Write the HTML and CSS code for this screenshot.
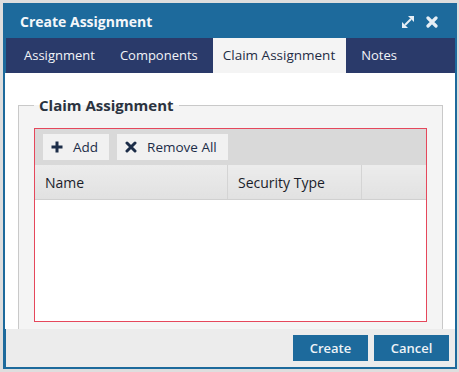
FILE: index.html
```html
<!DOCTYPE html>
<html lang="en">
<head>
    <meta charset="UTF-8">
    <title>Create Assignment</title>
    <link rel="stylesheet" href="styles.css">
</head>
<body>

    <div class="dialog">
        <div class="dialog-title">
            <span>Create Assignment</span>
            <div class="title-icons">
                <!-- maximize -->
                <svg width="12" height="12" viewBox="0 0 12 12">
                    <path d="M3 9 L9 3" stroke="#e6eef5" stroke-width="2"/>
                    <polygon points="6,0 12,0 12,6" fill="#e6eef5"/>
                    <polygon points="0,6 0,12 6,12" fill="#e6eef5"/>
                </svg>
                <!-- close -->
                <svg width="12" height="12" viewBox="0 0 12 12">
                    <path d="M2 2 L10 10 M10 2 L2 10" stroke="#e6eef5" stroke-width="3.2" stroke-linecap="round"/>
                </svg>
            </div>
        </div>

        <ul class="tabs">
            <li class="tab">Assignment</li>
            <li class="tab">Components</li>
            <li class="tab active">Claim Assignment</li>
            <li class="tab">Notes</li>
        </ul>

        <div class="content">
            <fieldset class="group">
                <legend>Claim Assignment</legend>
                <div class="grid-box">
                    <div class="toolbar">
                        <button class="tool-btn">
                            <svg width="12" height="12" viewBox="0 0 12 12">
                                <path d="M6 0.5 V11.5 M0.5 6 H11.5" stroke="#1c2d48" stroke-width="3"/>
                            </svg>
                            Add
                        </button>
                        <button class="tool-btn">
                            <svg width="12" height="12" viewBox="0 0 12 12">
                                <path d="M2 2 L10 10 M10 2 L2 10" stroke="#1c2d48" stroke-width="3" stroke-linecap="round"/>
                            </svg>
                            Remove All
                        </button>
                    </div>
                    <table class="grid">
                        <thead>
                            <tr>
                                <th class="col-name">Name</th>
                                <th class="col-type">Security Type</th>
                                <th></th>
                            </tr>
                        </thead>
                    </table>
                </div>
            </fieldset>
        </div>

        <div class="footer">
            <button class="btn">Create</button>
            <button class="btn">Cancel</button>
        </div>
    </div>

</body>
</html>
```

FILE: styles.css
```css
body {
    margin: 0;
    background-color: #dedede;
    font-family: 'Open Sans', sans-serif;
}

.dialog {
    width: 454px;
    margin: 3px;
    box-sizing: border-box;
    border: 2px solid #1d6a9c;
    background-color: #1d6a9c;
}

.dialog-title {
    height: 33px;
    display: flex;
    align-items: center;
    justify-content: space-between;
    padding: 0 17px 0 15px;
    color: #f4f7fa;
    font-size: 14px;
    font-weight: bold;
}

.title-icons {
    display: flex;
    gap: 12px;
    align-items: center;
}

.title-icons svg {
    display: block;
}

.tabs {
    list-style: none;
    margin: 0 0 0 1px;
    padding: 0 0 0 8px;
    height: 35px;
    display: flex;
    gap: 5px;
    background-color: #2a3a6a;
}

.tab {
    padding: 0 10px;
    line-height: 35px;
    font-size: 13px;
    color: #f2f4f8;
}

.tab.active {
    padding: 0 11px 0 10px;
    background-color: #f4f4f4;
    color: #1f2c44;
    font-size: 13.5px;
}

.content {
    height: 256px;
    overflow: hidden;
    background-color: #fff;
    padding: 22px 12px 0 13px;
    box-sizing: border-box;
}

.group {
    margin: 0;
    padding: 13px 15px 20px 15px;
    border: 1px solid #c9c9c9;
    background-color: #f4f4f4;
}

.group legend {
    padding: 0 5px;
    margin-left: 0;
    line-height: 20px;
    font-size: 15px;
    font-weight: bold;
    color: #2b3340;
}

.grid-box {
    height: 192px;
    border: 1px solid #e5475b;
    background-color: #fff;
}

.toolbar {
    height: 36px;
    box-sizing: border-box;
    padding: 5px 8px;
    display: flex;
    gap: 8px;
    background-color: #d9d9d9;
}

.tool-btn {
    height: 26px;
    display: flex;
    align-items: center;
    gap: 10px;
    padding: 0 11px 0 8px;
    border: none;
    background-color: #f1f1f1;
    font-family: 'Open Sans', sans-serif;
    font-size: 13.5px;
    color: #1c2d48;
}

.grid {
    width: 100%;
    border-collapse: collapse;
}

.grid th {
    height: 34px;
    padding: 0 10px;
    text-align: left;
    font-size: 14px;
    font-weight: normal;
    color: #1a1d2a;
    background: linear-gradient(#ececec, #e1e1e1);
    border-bottom: 1px solid #d0d0d0;
    border-left: 1px solid #d4d4d4;
}

.grid th:first-child {
    border-left: none;
}

.col-name {
    width: 172px;
}

.col-type {
    width: 113px;
}

.footer {
    height: 38px;
    display: flex;
    justify-content: flex-end;
    align-items: flex-start;
    gap: 6px;
    padding: 6px 6px 0 0;
    box-sizing: border-box;
    background-color: #ececec;
    margin-left: 1px;
}

.btn {
    width: 75px;
    height: 26px;
    border: none;
    background-color: #1d6a9c;
    color: #eef3f7;
    font-family: 'Open Sans', sans-serif;
    font-size: 13px;
    font-weight: 600;
}
```
